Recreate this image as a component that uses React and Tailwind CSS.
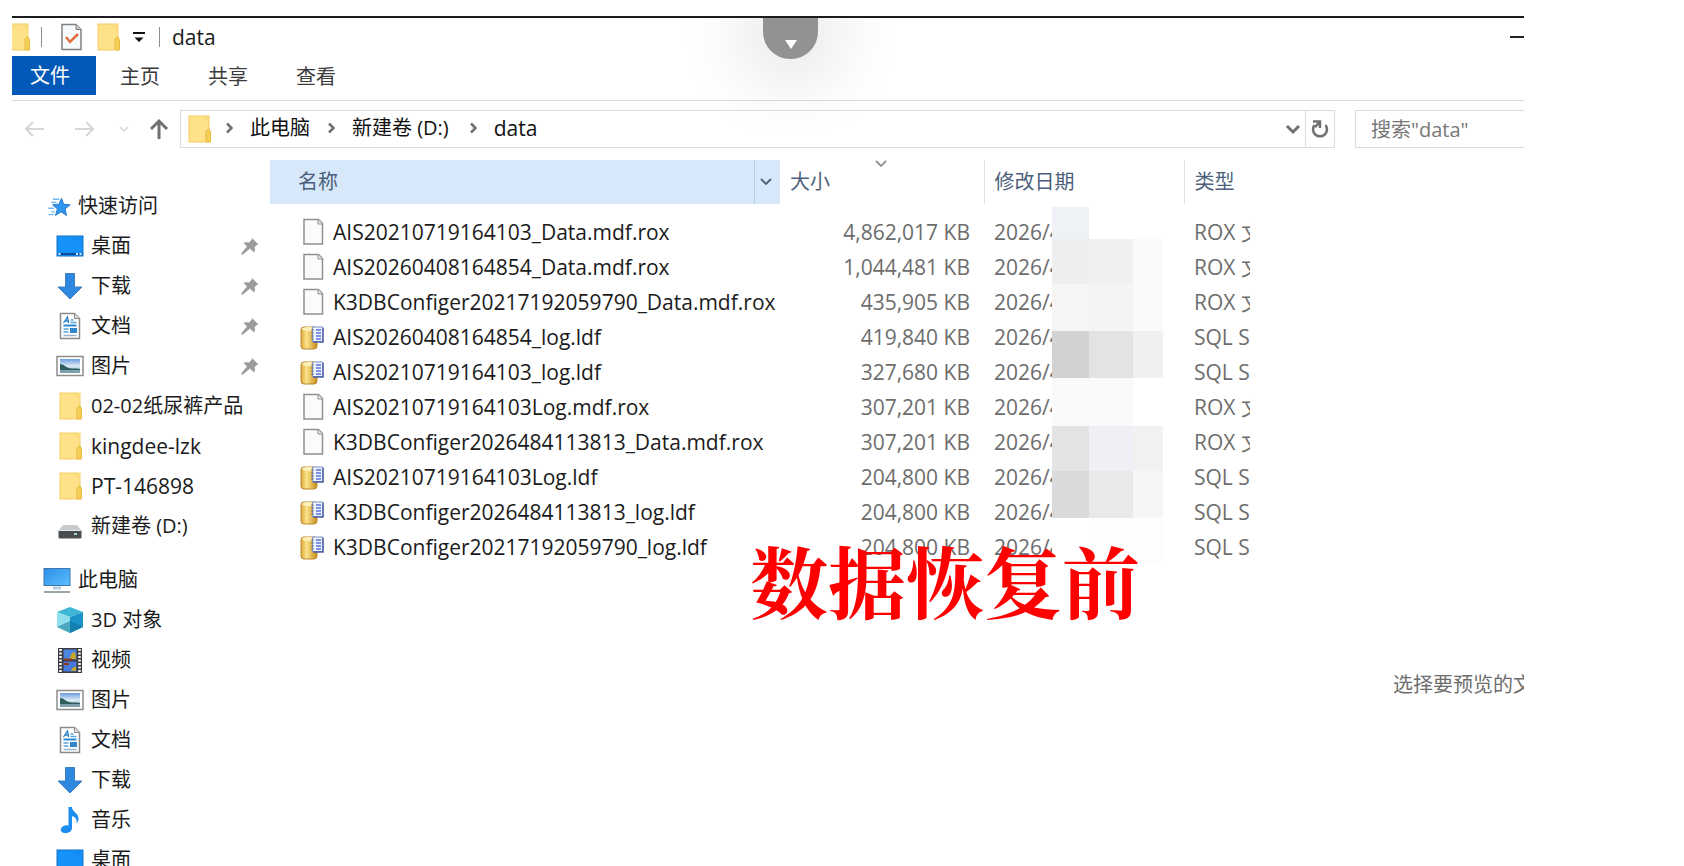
import React, { useState } from "react";

// --- Icons ---
const FolderIcon = () => (
  <svg width="28" height="28" viewBox="0 0 28 28">
    <rect x="4" y="1" width="20" height="26" fill="#ffe18a" />
    <rect x="4" y="1" width="20" height="26" fill="none" stroke="#f0cd62" />
    <path d="M21 26V16l3-2 1.500 3v10h-4z" fill="#f6cf58" stroke="#e6b93f" />
    <path d="M19 2l4 4" stroke="#f0cd62" />
  </svg>
);

const StarIcon = () => (
  <svg width="28" height="28" viewBox="-4 -3 31 31">
    <path
      d="M16.500 4l2.400 6.600 7.100.600-5.600 4.600 1.700 7.200-6-4-6.300 4 2.200-7.300-5.500-4.600 7-.500z"
      fill="#2f95ee"
      stroke="#1c74c8"
    />
    <path d="M7 5h7M5 8.500h6M2 15h6M5 19h4M2 22h6" stroke="#6fb6f2" strokeWidth="1.500" />
  </svg>
);

const DesktopIcon = () => (
  <svg width="28" height="28" viewBox="0 0 28 28">
    <rect x="1" y="4" width="26" height="20" fill="#1593fb" stroke="#1272c4" />
    <path d="M2 22h24" stroke="#0a4f9a" strokeWidth="2" />
    <path d="M2.500 22h2M20 22h2M23.500 22h2" stroke="#d8efff" strokeWidth="2" />
    <path d="M17 7h7v4" fill="none" stroke="#1180e0" />
  </svg>
);

const DownloadIcon = () => (
  <svg width="28" height="28" viewBox="0 0 28 28">
    <path d="M9.500 1.500h9V15H26L14 27 2 15h7.500z" fill="#2f88e0" stroke="#3f7fc4" />
  </svg>
);

const DocumentIcon = () => (
  <svg width="28" height="28" viewBox="0 0 28 28">
    <path d="M4.500 1.500h14l5 5v20h-19z" fill="#fff" stroke="#8a8a8a" strokeWidth="1.500" />
    <path d="M18.500 1.500v5h5" fill="#ddd" stroke="#8a8a8a" />
    <path d="M7.500 11l4-6 1 6M9 9h4" fill="none" stroke="#2c7fc4" strokeWidth="1.300" />
    <path d="M14.500 8h3M14.500 10.500h6" stroke="#57a5de" strokeWidth="1.300" />
    <path d="M7.500 13.500h13" stroke="#2b8ad6" strokeWidth="2" />
    <path d="M7.500 17h5M7.500 20h5" stroke="#57a5de" strokeWidth="1.500" />
    <path d="M7.500 23.500h13" stroke="#9ab3c8" strokeWidth="1.500" />
    <rect x="14" y="16" width="7" height="5" fill="#2f86cf" />
  </svg>
);

const PictureIcon = () => (
  <svg width="28" height="28" viewBox="0 0 28 28">
    <defs>
      <linearGradient id="sky" x1="0" y1="0" x2="0" y2="1">
        <stop offset="0" stopColor="#6c9be0" />
        <stop offset="0.5" stopColor="#dcecf5" />
        <stop offset="1" stopColor="#7ba6b8" />
      </linearGradient>
    </defs>
    <rect x="1" y="4.500" width="26" height="19" fill="#fff" stroke="#8d8d8d" strokeWidth="1.500" />
    <rect x="4" y="7" width="20" height="14" fill="url(#sky)" />
    <path d="M4 12c4 0 5 3 9 4 4 1 7 0 11 1v1H4z" fill="#2f5f5c" />
    <path d="M4 18h20v3H4z" fill="#7d9fae" />
  </svg>
);

const DriveIcon = () => (
  <svg width="28" height="28" viewBox="0 0 28 28">
    <path d="M7 13h14l5 6H2z" fill="#c9cbcc" />
    <rect x="2.500" y="18.500" width="23" height="8" rx="1" fill="#4a4d4f" />
    <path d="M3 18.500h22" stroke="#e4e5e6" />
    <rect x="18" y="21" width="3" height="2" fill="#9fd9c3" />
  </svg>
);

const ComputerIcon = () => (
  <svg width="28" height="28" viewBox="0 0 28 28">
    <defs>
      <linearGradient id="screen" x1="0" y1="0" x2="1" y2="1">
        <stop offset="0" stopColor="#2b8fe6" />
        <stop offset="1" stopColor="#5cc0ff" />
      </linearGradient>
    </defs>
    <rect x="1" y="2.500" width="26" height="17" fill="url(#screen)" stroke="#3f78ad" />
    <path d="M10 22h8" stroke="#b8cfe0" strokeWidth="3" />
    <path d="M1 26h26" stroke="#9aa6ae" strokeWidth="2" />
  </svg>
);

const CubeIcon = () => (
  <svg width="28" height="28" viewBox="0 0 28 28">
    <path d="M14 1l13 5-13 5L1 6z" fill="#3fb6d8" />
    <path d="M1 6l13 5v16L1 21z" fill="#8fe0ec" />
    <path d="M27 6l-13 5v16l13-6z" fill="#1b93c6" />
    <path d="M1 21l13-6v12z" fill="#4aa7bd" />
    <path d="M27 21l-13-6v12z" fill="#1380b2" />
  </svg>
);

const VideoIcon = () => (
  <svg width="28" height="28" viewBox="0 0 28 28">
    <rect x="2" y="2" width="24" height="25" fill="#3c3c40" />
    <path d="M4.500 3v23M23.500 3v23" stroke="#fff" strokeWidth="2.500" strokeDasharray="2 1.500" />
    <rect x="7.500" y="3.500" width="13" height="10" fill="#4c86dd" />
    <rect x="7.500" y="15.500" width="13" height="10" fill="#4779dc" />
    <path d="M14 13c0-4 3-7 4-7s2 3 2 7zM15 25c1-3 3-5 5-4v4z" fill="#c9a524" />
    <path d="M8 13.500h8M8 18h5" stroke="#8e3b24" strokeWidth="2" />
  </svg>
);

const MusicIcon = () => (
  <svg width="28" height="28" viewBox="0 0 28 28">
    <path
      d="M12.500 1h3.500c0 5 7 6 6.500 12-.200 2-1 3.500-2 4.500.800-4-1-6.500-4.500-7.500v12c0 3-3 5-6.500 5S4 25 5 22.500s4.500-4 7.500-3z"
      fill="#1c8df0"
    />
  </svg>
);

const PinIcon = () => (
  <svg width="18" height="18" viewBox="0 0 18 18" fill="#9b9b9b">
    <path d="M11 1l6.500 6.500-2 .500-2 2.500c.800 2 .500 4-.500 5l-4-4L2 17.500.500 17.500V16L6 9.500l-3.500-3.500C4 5 6 5 8 5.500l2.500-2.500z" />
  </svg>
);

const BlankFileIcon = () => (
  <svg width="26" height="28" viewBox="0 0 26 28">
    <path d="M4 1.500h14.500l4 4v20.500H4z" fill="#fbfbf9" stroke="#909090" strokeWidth="1.500" />
    <path d="M18 1.500v4.500h4.500" fill="#e8e8e8" stroke="#909090" />
  </svg>
);

const DatabaseIcon = () => (
  <svg width="26" height="28" viewBox="0 0 26 28">
    <defs>
      <linearGradient id="gold" x1="0" y1="0" x2="1" y2="0">
        <stop offset="0" stopColor="#e0a73a" />
        <stop offset="0.35" stopColor="#fbe48c" />
        <stop offset="1" stopColor="#c98d18" />
      </linearGradient>
    </defs>
    <rect x="1" y="4" width="16" height="22" rx="3" fill="url(#gold)" stroke="#b8892f" />
    <ellipse cx="9" cy="6" rx="7" ry="2" fill="#fdf0b8" />
    <path d="M12.500 4h10.500v14.500H12.500z" fill="#eef2ff" stroke="#7d8fc0" />
    <path d="M23 5v14H13" fill="none" stroke="#4e62a6" strokeWidth="1.500" />
    <path d="M11 7h3M11 10h3M11 13h3M11 16h3" stroke="#777" />
    <path d="M16 7h5M16 10h5M16 13h5M16 16h5" stroke="#5a74d8" strokeWidth="1.500" />
  </svg>
);

const ChevronDown = ({ className }) => (
  <svg width="12" height="12" viewBox="0 0 12 12" fill="none" stroke="currentColor" className={className}>
    <path d="M1 3l5 5 5-5" strokeWidth="1.800" />
  </svg>
);

const Separator = () => (
  <svg width="12" height="12" viewBox="0 0 12 12" fill="none" stroke="#707070" strokeWidth="2.500">
    <path d="M4 1.500L8.500 6 4 10.500" />
  </svg>
);

// --- Data ---
const quickAccess = [
  { label: "桌面", icon: DesktopIcon, pinned: true },
  { label: "下载", icon: DownloadIcon, pinned: true },
  { label: "文档", icon: DocumentIcon, pinned: true },
  { label: "图片", icon: PictureIcon, pinned: true },
  { label: "02-02纸尿裤产品", icon: FolderIcon },
  { label: "kingdee-lzk", icon: FolderIcon, latin: true },
  { label: "PT-146898", icon: FolderIcon, latin: true },
  { label: "新建卷 (D:)", icon: DriveIcon },
];

const thisPc = [
  { label: "3D 对象", icon: CubeIcon },
  { label: "视频", icon: VideoIcon },
  { label: "图片", icon: PictureIcon },
  { label: "文档", icon: DocumentIcon },
  { label: "下载", icon: DownloadIcon },
  { label: "音乐", icon: MusicIcon },
  { label: "桌面", icon: DesktopIcon },
];

const files = [
  { name: "AIS20210719164103_Data.mdf.rox", size: "4,862,017 KB", type: "ROX 文件" },
  { name: "AIS20260408164854_Data.mdf.rox", size: "1,044,481 KB", type: "ROX 文件" },
  { name: "K3DBConfiger20217192059790_Data.mdf.rox", size: "435,905 KB", type: "ROX 文件" },
  { name: "AIS20260408164854_log.ldf", size: "419,840 KB", type: "SQL S" },
  { name: "AIS20210719164103_log.ldf", size: "327,680 KB", type: "SQL S" },
  { name: "AIS20210719164103Log.mdf.rox", size: "307,201 KB", type: "ROX 文件" },
  { name: "K3DBConfiger2026484113813_Data.mdf.rox", size: "307,201 KB", type: "ROX 文件" },
  { name: "AIS20210719164103Log.ldf", size: "204,800 KB", type: "SQL S" },
  { name: "K3DBConfiger2026484113813_log.ldf", size: "204,800 KB", type: "SQL S" },
  { name: "K3DBConfiger20217192059790_log.ldf", size: "204,800 KB", type: "SQL S" },
];

const mosaic = [
  "bg-[#eef2f6]", "bg-white", "bg-white",
  "bg-[#eeeeee]", "bg-[#f0f0f0]", "bg-[#fafafa]",
  "bg-[#f5f5f5]", "bg-[#f5f4f3]", "bg-[#fafafa]",
  "bg-[#d2d2d2]", "bg-[#e3e3e6]", "bg-[#f0f0f0]",
  "bg-[#fafafa]", "bg-[#fafafa]", "bg-white",
  "bg-[#e3e3e3]", "bg-[#eef0f5]", "bg-[#f1f1f1]",
  "bg-[#dadadc]", "bg-[#e9e9e9]", "bg-[#f6f6f9]",
  "bg-white", "bg-[#fdfdfd]", "bg-[#fdfdfd]",
];

// --- Sidebar ---
const SidebarItem = ({ item }) => {
  const Icon = item.icon;
  return (
    <li>
      <a href="#" className="flex h-10 items-center gap-[7px] pl-11 pr-[11px]">
        <Icon />
        <span className={item.latin ? "flex-1 text-[21px]" : "flex-1 whitespace-nowrap"}>
          {item.label}
        </span>
        {item.pinned && <PinIcon />}
      </a>
    </li>
  );
};

const SidebarGroup = ({ label, icon: Icon, items }) => (
  <section>
    <a href="#" className="flex h-10 items-center gap-[7px] pl-[31px]">
      <Icon />
      {label}
    </a>
    <ul>
      {items.map((item) => (
        <SidebarItem key={item.label} item={item} />
      ))}
    </ul>
  </section>
);

const App = () => {
  const [search, setSearch] = useState("");

  return (
    <div className="h-screen overflow-hidden bg-white pt-4 pl-3 pr-40 font-['Open_Sans','Noto_Sans_CJK_SC',sans-serif] text-[20px] leading-7 text-[#1b1b1b]">
      <div className="relative flex h-full flex-col overflow-hidden border-t-2 border-[#1c1c20]">
        {/* --- TITLE BAR --- */}
        <header className="flex h-[38px] shrink-0 items-center">
          <div className="-ml-2">
            <FolderIcon />
          </div>
          <span className="ml-[9px] h-5 w-px bg-[#8c8c8c]" />
          <button className="ml-4" aria-label="属性">
            <svg width="28" height="28" viewBox="0 0 28 28">
              <path d="M4 1.500h14l5 5v20H4z" fill="#f7fafc" stroke="#808080" strokeWidth="1.500" />
              <path d="M18 1.500v5h5" fill="#ccc" stroke="#808080" />
              <path d="M8 14l4 5 8-8" fill="none" stroke="#e0703a" strokeWidth="2.500" />
            </svg>
          </button>
          <button className="ml-2" aria-label="新建文件夹">
            <FolderIcon />
          </button>
          <button className="ml-[11px]" aria-label="自定义">
            <svg width="12" height="12" viewBox="0 0 12 12">
              <path d="M0 1h12v2H0zM1.500 6.500h9L6 11z" fill="#111" />
            </svg>
          </button>
          <span className="ml-[14px] h-5 w-px bg-[#8c8c8c]" />
          <h1 className="ml-3 flex-1 text-[21px]">data</h1>
          <button className="h-[2px] w-[14px] bg-[#222]" aria-label="最小化" />
        </header>

        {/* --- RIBBON TABS --- */}
        <nav className="flex h-[45px] shrink-0 items-start border-b border-[#dcdcdc] text-[#3c3c3c]">
          <button className="h-[39px] w-[84px] bg-[#0359b8] pr-2 text-white">文件</button>
          <button className="h-[39px] px-6 pt-[2px]">主页</button>
          <button className="h-[39px] px-6 pt-[2px]">共享</button>
          <button className="h-[39px] px-6 pt-[2px]">查看</button>
        </nav>

        {/* --- ADDRESS BAR --- */}
        <div className="flex h-[59px] shrink-0 items-start pt-[9px]">
          <div className="flex h-[38px] flex-1 items-center">
            <button className="ml-3 text-[#d6d6d6]" aria-label="后退">
              <svg width="20" height="20" viewBox="0 0 20 20" fill="none" stroke="currentColor" strokeWidth="2">
                <path d="M20 10H2M9 3l-7 7 7 7" />
              </svg>
            </button>
            <button className="ml-[31px] text-[#d6d6d6]" aria-label="前进">
              <svg width="20" height="20" viewBox="0 0 20 20" fill="none" stroke="currentColor" strokeWidth="2">
                <path d="M0 10h18M11 3l7 7-7 7" />
              </svg>
            </button>
            <button className="ml-6 text-[#d6d6d6]" aria-label="最近">
              <svg width="10" height="10" viewBox="0 0 10 10" fill="none" stroke="currentColor" strokeWidth="1.500">
                <path d="M1 3l4 4 4-4" />
              </svg>
            </button>
            <button className="ml-5 text-[#707070]" aria-label="上移">
              <svg width="20" height="22" viewBox="0 0 20 22" fill="none" stroke="currentColor" strokeWidth="3">
                <path d="M10 21V3M2 11l8-8 8 8" />
              </svg>
            </button>
            <div className="ml-[11px] flex h-[38px] flex-1 items-center border border-[#dcdcdc] text-[#111]">
              <div className="ml-1">
                <FolderIcon />
              </div>
              <div className="ml-[10px] flex flex-1 items-center gap-[15px] pb-[2px]">
                <Separator />
                <a href="#">此电脑</a>
                <Separator />
                <a href="#" className="mr-[3px]">新建卷 (D:)</a>
                <Separator />
                <a href="#" className="text-[21px]">data</a>
              </div>
              <button className="mr-1 text-[#707070]" aria-label="展开">
                <svg width="16" height="12" viewBox="0 0 16 12" fill="none" stroke="currentColor" strokeWidth="3">
                  <path d="M2 3l6 6 6-6" />
                </svg>
              </button>
              <button
                className="flex h-full w-[29px] items-center justify-center border-l border-[#dcdcdc] text-[#707070]"
                aria-label="刷新"
              >
                <svg width="18" height="20" viewBox="0 0 18 20" fill="none" stroke="currentColor" strokeWidth="2.500">
                  <path d="M14.500 6a7 7 0 1 1-11 0" />
                  <path d="M2 2.500h7V9" />
                  <path d="M9 3L4 8" />
                </svg>
              </button>
            </div>
          </div>
          <input
            type="text"
            aria-label="搜索"
            value={search}
            onChange={(e) => setSearch(e.target.value)}
            placeholder={'搜索"data"'}
            className="ml-5 h-[38px] w-[169px] border border-r-0 border-[#dcdcdc] pl-[15px] outline-none placeholder:text-[#777]"
          />
        </div>

        {/* --- BODY --- */}
        <div className="flex min-h-0 flex-1 items-start">
          <aside className="flex w-[258px] shrink-0 flex-col gap-[14px] pt-[26px]">
            <SidebarGroup label="快速访问" icon={StarIcon} items={quickAccess} />
            <SidebarGroup label="此电脑" icon={ComputerIcon} items={thisPc} />
          </aside>

          <main className="relative shrink-0">
            <table className="w-[980px] table-fixed border-collapse">
              <colgroup>
                <col className="w-[510px]" />
                <col className="w-[204px]" />
                <col className="w-[200px]" />
                <col className="w-[66px]" />
              </colgroup>
              <thead className="text-left text-[#4c5f7c]">
                <tr className="h-11">
                  <th className="bg-[#d6e8f9] p-0 font-normal">
                    <div className="flex h-11 items-center pl-7">
                      <span className="flex-1">名称</span>
                      <span className="flex h-full w-[26px] items-center border-l border-[#b4cfe4] pl-[5px]">
                        <ChevronDown />
                      </span>
                    </div>
                  </th>
                  <th className="relative border-r border-[#e2e2e2] p-0 pl-[10px] font-normal">
                    大小
                    <ChevronDown className="absolute -top-[2px] left-[95px] text-[#909090]" />
                  </th>
                  <th className="border-r border-[#e2e2e2] p-0 pl-[10px] font-normal">修改日期</th>
                  <th className="p-0 pl-[10px] font-normal">类型</th>
                </tr>
              </thead>
              <tbody className="text-[21px] text-[#6d6d6d] before:block before:h-[10px] before:content-['']">
                {files.map((file) => (
                  <tr key={file.name} className="h-[35px]">
                    <td className="p-0 text-[#1b1b1b]">
                      <div className="flex items-center gap-[7px] pl-[30px]">
                        {file.name.endsWith(".ldf") ? <DatabaseIcon /> : <BlankFileIcon />}
                        {file.name}
                      </div>
                    </td>
                    <td className="p-0 pr-[14px] text-right">{file.size}</td>
                    <td className="p-0 pl-[10px]">2026/4</td>
                    <td className="p-0 pl-[10px]">
                      <div className="overflow-hidden whitespace-nowrap">{file.type}</div>
                    </td>
                  </tr>
                ))}
              </tbody>
            </table>

            {/* Pixelated patch over the date column */}
            <div className="absolute top-[47px] left-[782px] grid grid-cols-[37px_44px_30px] grid-rows-[32px_45px_47px_47px_48px_45px_47px_47px]">
              {mosaic.map((color, i) => (
                <div key={i} className={color} />
              ))}
            </div>

            {/* Caption */}
            <p className="absolute top-[380px] left-[480px] font-['Noto_Serif_CJK_SC','Noto_Sans_CJK_SC',serif] text-[78px] leading-none font-bold whitespace-nowrap text-[#ff0000]">
              数据恢复前
            </p>
          </main>

          <div className="min-w-0 flex-1 overflow-hidden pt-[511px] pl-[143px] whitespace-nowrap text-[#6d6d6d]">
            选择要预览的文件。
          </div>
        </div>

        {/* --- PULL-DOWN HANDLE --- */}
        <button
          className="absolute top-0 left-[751px] flex h-[41px] w-[55px] items-end justify-center rounded-b-[27px] bg-[#929292] pb-[10px] shadow-[0_0_80px_10px_rgba(0,0,0,0.2)]"
          aria-label="展开工具栏"
        >
          <svg width="12" height="9" viewBox="0 0 12 9">
            <path d="M0 0h12L6 9z" fill="#fff" />
          </svg>
        </button>
      </div>
    </div>
  );
};

export default App;
